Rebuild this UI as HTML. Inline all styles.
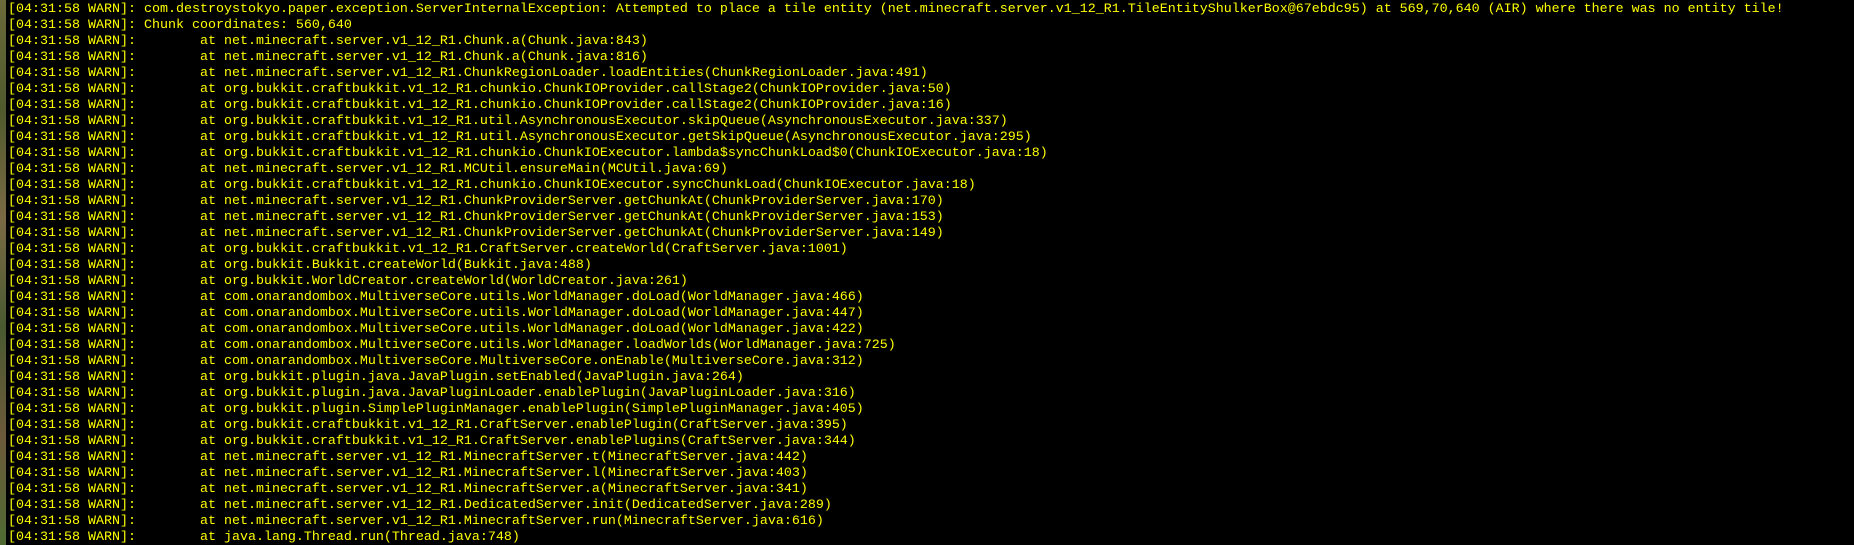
<!DOCTYPE html>
<html><head><meta charset="utf-8"><style>
html,body{margin:0;padding:0;background:#000;width:1854px;height:545px;overflow:hidden}
#wrap{position:relative;width:1854px;height:545px;overflow:hidden;background:#000}
.strip{position:absolute;left:0;top:0;width:6px;height:545px;background:linear-gradient(180deg,#6b6a3a,#4f5a2c 20%,#7a6a44 40%,#4a5a30 60%,#6c5a3a 80%,#4f6a32)}
pre{position:absolute;left:8px;top:2px;margin:0;font-family:"Liberation Mono",monospace;font-size:13.33px;line-height:16px;color:#ffff00;white-space:pre}
</style></head><body><div id="wrap">
<div class="strip"></div>
<pre>[04:31:58 WARN]: com.destroystokyo.paper.exception.ServerInternalException: Attempted to place a tile entity (net.minecraft.server.v1_12_R1.TileEntityShulkerBox@67ebdc95) at 569,70,640 (AIR) where there was no entity tile!
[04:31:58 WARN]: Chunk coordinates: 560,640
[04:31:58 WARN]:        at net.minecraft.server.v1_12_R1.Chunk.a(Chunk.java:843)
[04:31:58 WARN]:        at net.minecraft.server.v1_12_R1.Chunk.a(Chunk.java:816)
[04:31:58 WARN]:        at net.minecraft.server.v1_12_R1.ChunkRegionLoader.loadEntities(ChunkRegionLoader.java:491)
[04:31:58 WARN]:        at org.bukkit.craftbukkit.v1_12_R1.chunkio.ChunkIOProvider.callStage2(ChunkIOProvider.java:50)
[04:31:58 WARN]:        at org.bukkit.craftbukkit.v1_12_R1.chunkio.ChunkIOProvider.callStage2(ChunkIOProvider.java:16)
[04:31:58 WARN]:        at org.bukkit.craftbukkit.v1_12_R1.util.AsynchronousExecutor.skipQueue(AsynchronousExecutor.java:337)
[04:31:58 WARN]:        at org.bukkit.craftbukkit.v1_12_R1.util.AsynchronousExecutor.getSkipQueue(AsynchronousExecutor.java:295)
[04:31:58 WARN]:        at org.bukkit.craftbukkit.v1_12_R1.chunkio.ChunkIOExecutor.lambda$syncChunkLoad$0(ChunkIOExecutor.java:18)
[04:31:58 WARN]:        at net.minecraft.server.v1_12_R1.MCUtil.ensureMain(MCUtil.java:69)
[04:31:58 WARN]:        at org.bukkit.craftbukkit.v1_12_R1.chunkio.ChunkIOExecutor.syncChunkLoad(ChunkIOExecutor.java:18)
[04:31:58 WARN]:        at net.minecraft.server.v1_12_R1.ChunkProviderServer.getChunkAt(ChunkProviderServer.java:170)
[04:31:58 WARN]:        at net.minecraft.server.v1_12_R1.ChunkProviderServer.getChunkAt(ChunkProviderServer.java:153)
[04:31:58 WARN]:        at net.minecraft.server.v1_12_R1.ChunkProviderServer.getChunkAt(ChunkProviderServer.java:149)
[04:31:58 WARN]:        at org.bukkit.craftbukkit.v1_12_R1.CraftServer.createWorld(CraftServer.java:1001)
[04:31:58 WARN]:        at org.bukkit.Bukkit.createWorld(Bukkit.java:488)
[04:31:58 WARN]:        at org.bukkit.WorldCreator.createWorld(WorldCreator.java:261)
[04:31:58 WARN]:        at com.onarandombox.MultiverseCore.utils.WorldManager.doLoad(WorldManager.java:466)
[04:31:58 WARN]:        at com.onarandombox.MultiverseCore.utils.WorldManager.doLoad(WorldManager.java:447)
[04:31:58 WARN]:        at com.onarandombox.MultiverseCore.utils.WorldManager.doLoad(WorldManager.java:422)
[04:31:58 WARN]:        at com.onarandombox.MultiverseCore.utils.WorldManager.loadWorlds(WorldManager.java:725)
[04:31:58 WARN]:        at com.onarandombox.MultiverseCore.MultiverseCore.onEnable(MultiverseCore.java:312)
[04:31:58 WARN]:        at org.bukkit.plugin.java.JavaPlugin.setEnabled(JavaPlugin.java:264)
[04:31:58 WARN]:        at org.bukkit.plugin.java.JavaPluginLoader.enablePlugin(JavaPluginLoader.java:316)
[04:31:58 WARN]:        at org.bukkit.plugin.SimplePluginManager.enablePlugin(SimplePluginManager.java:405)
[04:31:58 WARN]:        at org.bukkit.craftbukkit.v1_12_R1.CraftServer.enablePlugin(CraftServer.java:395)
[04:31:58 WARN]:        at org.bukkit.craftbukkit.v1_12_R1.CraftServer.enablePlugins(CraftServer.java:344)
[04:31:58 WARN]:        at net.minecraft.server.v1_12_R1.MinecraftServer.t(MinecraftServer.java:442)
[04:31:58 WARN]:        at net.minecraft.server.v1_12_R1.MinecraftServer.l(MinecraftServer.java:403)
[04:31:58 WARN]:        at net.minecraft.server.v1_12_R1.MinecraftServer.a(MinecraftServer.java:341)
[04:31:58 WARN]:        at net.minecraft.server.v1_12_R1.DedicatedServer.init(DedicatedServer.java:289)
[04:31:58 WARN]:        at net.minecraft.server.v1_12_R1.MinecraftServer.run(MinecraftServer.java:616)
[04:31:58 WARN]:        at java.lang.Thread.run(Thread.java:748)
[04:31:58 WARN]:        at net.minecraft.server.v1_12_R1.Chunk.a(Chunk.java:843)</pre>
</div></body></html>
